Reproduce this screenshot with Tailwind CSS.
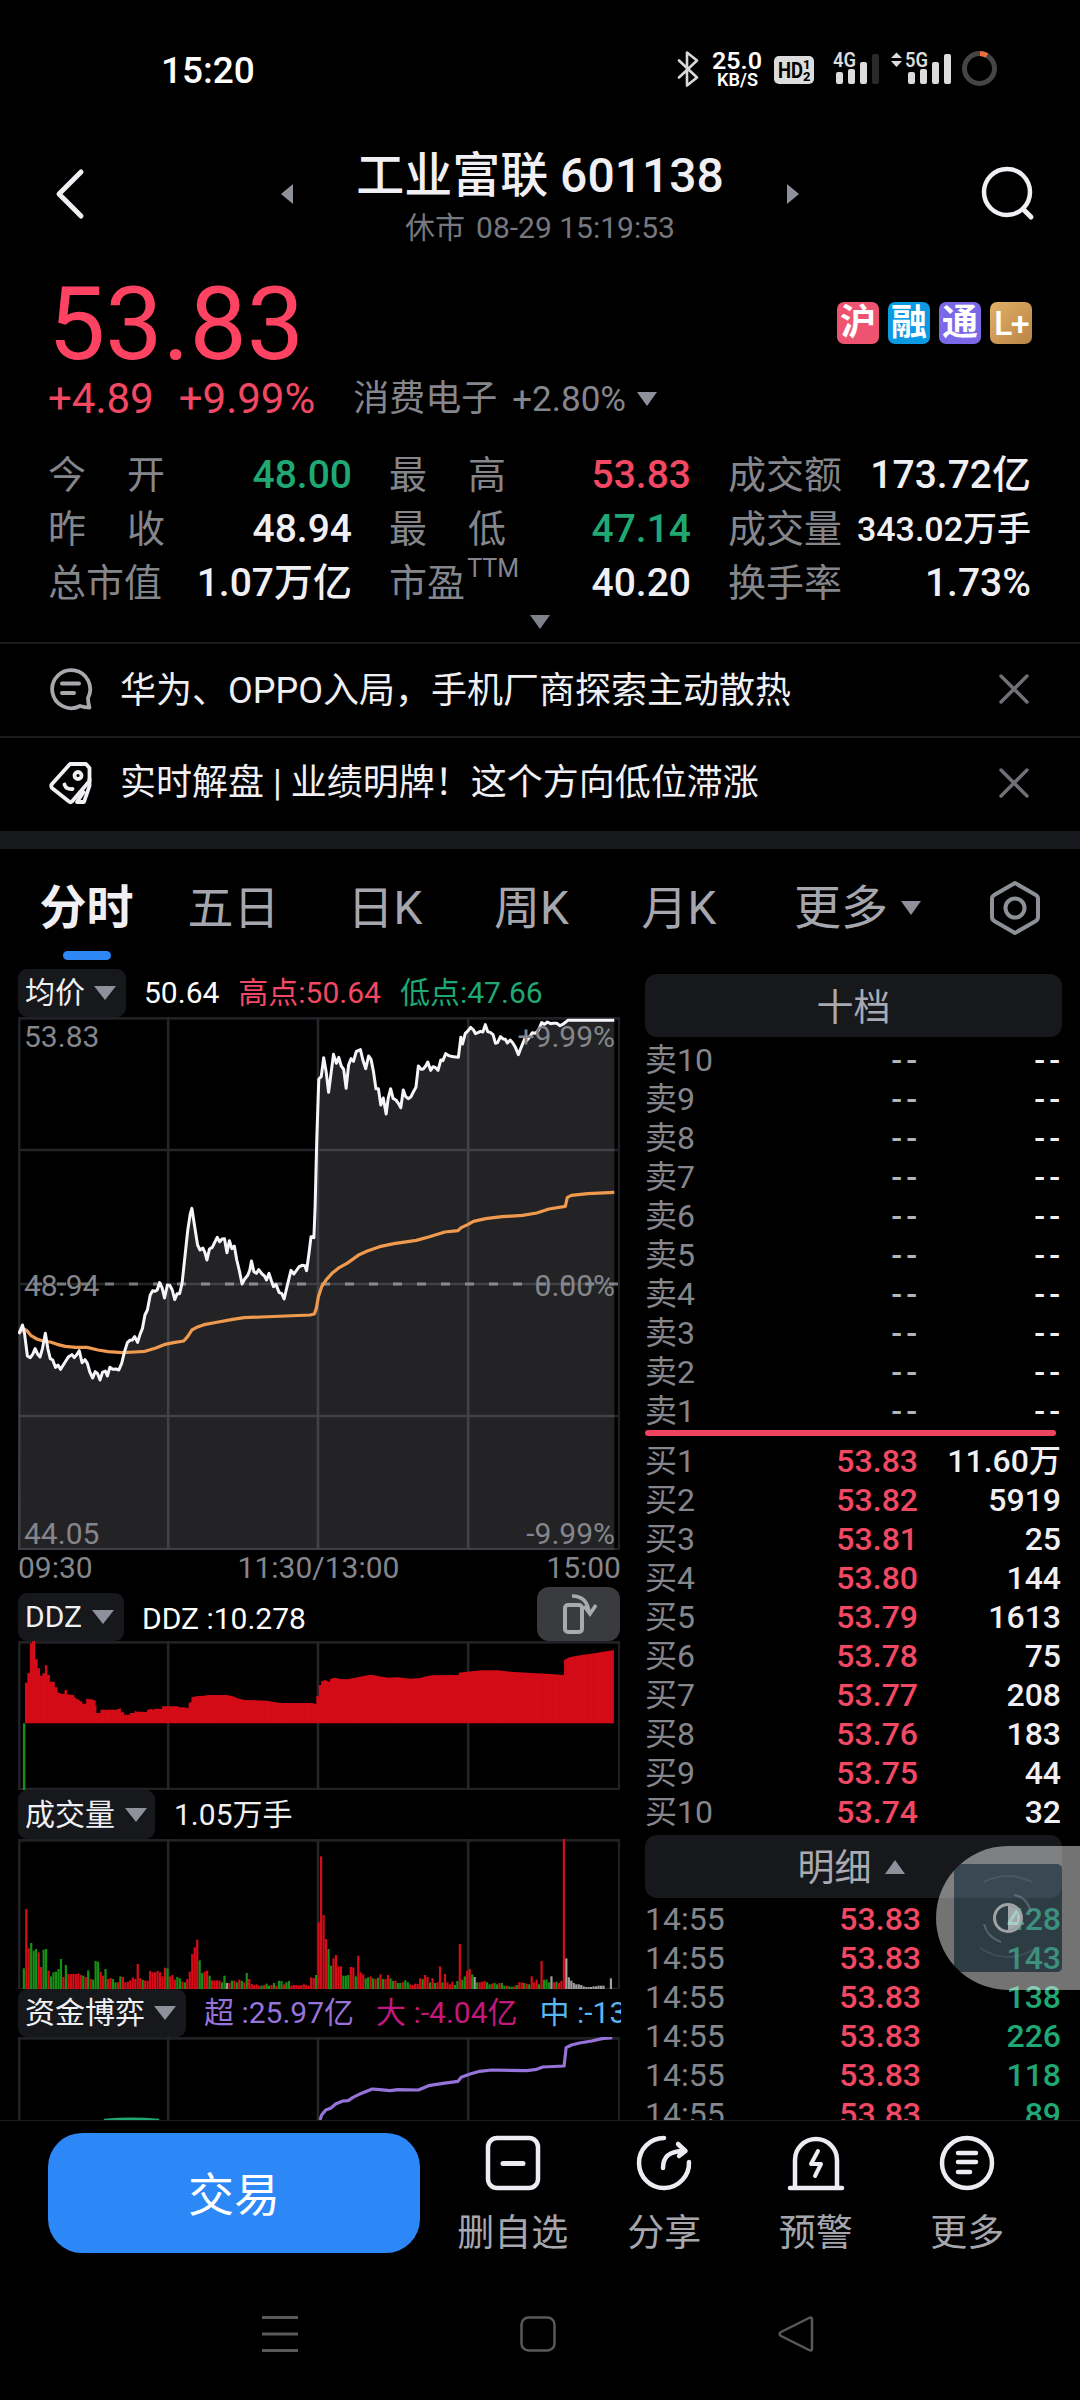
<!DOCTYPE html>
<html lang="zh-CN">
<head>
	<meta charset="UTF-8">
	<meta name="viewport" content="width=device-width, initial-scale=1.0">
	<script src="https://cdn.jsdelivr.net/npm/@tailwindcss/browser@4"></script>
	<title>工业富联 601138</title>
</head>
<body class="bg-black">
<div class="flex h-[2400px] w-[1080px] flex-col overflow-hidden bg-black font-['Roboto','Noto_Sans_CJK_SC',sans-serif] leading-none whitespace-nowrap text-[#f0f0f4]">

	<!-- status bar -->
	<div class="flex h-[140px] shrink-0 items-center justify-between pr-[82px] pl-[161px]">
		<span class="text-[37px] font-medium text-white">15:20</span>
		<svg width="321" height="60" viewBox="677 40 321 60" font-family="Roboto" font-weight="600">
			<path d="M679 61l18 17-10 8V53l10 8-18 17" transform="translate(0,-.5)" fill="none" stroke="#d8d8d8" stroke-width="2.6" stroke-linejoin="round" stroke-linecap="round"/>
			<text x="712" y="69" font-size="24" fill="#fff" textLength="50" lengthAdjust="spacingAndGlyphs">25.0</text>
			<text x="717" y="86" font-size="18.5" fill="#fff" textLength="41" lengthAdjust="spacingAndGlyphs">KB/S</text>
			<rect x="774" y="56" width="40" height="28" rx="5" fill="#dcdcdc"/>
			<text x="778" y="78" font-size="22" font-weight="700" fill="#000" textLength="25" lengthAdjust="spacingAndGlyphs">HD</text>
			<text x="803" y="69" font-size="13" font-weight="800" fill="#000">1</text>
			<text x="803" y="81" font-size="13" font-weight="800" fill="#000">2</text>
			<text x="833" y="67" font-size="20" fill="#dcdcdc" textLength="23" lengthAdjust="spacingAndGlyphs">4G</text>
			<g fill="#dcdcdc">
				<rect x="836" y="72" width="7" height="12" rx="2"/>
				<rect x="848" y="69" width="7" height="15" rx="2"/>
				<rect x="860" y="62" width="7" height="22" rx="2"/>
				<rect x="872" y="54" width="7" height="30" rx="2" fill="#2a2a2a"/>
				<path d="M891 58l5.500-5.500 5.500 5.500zM891 61l5.500 6 5.500-6z"/>
				<rect x="908" y="72" width="7" height="12" rx="2"/>
				<rect x="920" y="69" width="7" height="15" rx="2"/>
				<rect x="932" y="62" width="7" height="22" rx="2"/>
				<rect x="944" y="54" width="7" height="30" rx="2"/>
			</g>
			<text x="905" y="67" font-size="20" fill="#dcdcdc" textLength="23" lengthAdjust="spacingAndGlyphs">5G</text>
			<circle cx="979.500" cy="68.500" r="15" fill="none" stroke="#454545" stroke-width="5"/>
			<path d="M980 53.500a15 15 0 0 1 7 2" fill="none" stroke="#f0703c" stroke-width="5"/>
		</svg>
	</div>

	<!-- header -->
	<div class="flex h-[125px] shrink-0 items-start pr-[44px] pl-[54px]">
		<svg width="32" height="54" viewBox="0 0 32 54" class="mt-[27px]"><path d="M27 5L5 27l22 22" fill="none" stroke="#f0f0f4" stroke-width="5" stroke-linecap="round" stroke-linejoin="round"/></svg>
		<div class="ml-[194px] flex items-start">
			<svg width="14" height="22" viewBox="0 0 14 22" class="mt-[43px]"><path d="M13 1v20L1 11z" fill="#8e909c"/></svg>
			<div class="flex w-[492px] flex-col items-center pt-[12px]">
				<div class="text-[48px] font-medium">工业富联 601138</div>
				<div class="mt-[13px] flex gap-[11px] text-[30px] text-[#77787f]"><span>休市</span><span>08-29 15:19:53</span></div>
			</div>
			<svg width="14" height="22" viewBox="0 0 14 22" class="mt-[43px]"><path d="M1 1v20l12-10z" fill="#8e909c"/></svg>
		</div>
		<svg width="56" height="56" viewBox="0 0 56 56" class="mt-[26px] ml-auto"><circle cx="27" cy="26" r="23" fill="none" stroke="#f0f0f4" stroke-width="4.500"/><path d="M43 43l8 8" stroke="#f0f0f4" stroke-width="5" stroke-linecap="round"/></svg>
	</div>

	<!-- price -->
	<div class="flex h-[180px] shrink-0 justify-between pr-[48px] pl-[48px]">
		<div>
			<div class="mt-[8px] h-[102px] text-[102px] text-[#fe4362]">53.83</div>
			<div class="mt-[3px] flex h-[42px] items-center text-[42px] text-[#f24863]">
				<span>+4.89</span><span class="ml-[25px]">+9.99%</span>
				<span class="ml-[38px] text-[36px] text-[#85868c]">消费电子</span>
				<span class="ml-[15px] text-[35px] text-[#85868c]">+2.80%</span>
				<svg width="22" height="16" viewBox="0 0 22 16" class="ml-[10px]"><path d="M1 1h20l-10 14z" fill="#8e909c"/></svg>
			</div>
		</div>
		<div class="mt-[37px] flex gap-[9px] text-[36px] font-bold text-white">
			<span class="flex size-[42px] items-center justify-center rounded-[7px] bg-[#ee5470]">沪</span>
			<span class="flex size-[42px] items-center justify-center rounded-[7px] bg-[#0c9ae2]">融</span>
			<span class="flex size-[42px] items-center justify-center rounded-[7px] bg-[#7b68e6]">通</span>
			<span class="flex size-[42px] items-center justify-center rounded-[7px] bg-linear-to-br from-[#e3b067] to-[#b98546] text-[34px] font-medium tracking-tighter">L+</span>
		</div>
	</div>

	<!-- quote grid -->
	<div class="flex h-[197px] shrink-0 flex-col px-[48px] pt-[3px]">
		<div class="grid grid-cols-[304px_302px_303px] gap-x-[37px] text-[39px] font-medium [&_b]:flex [&_b]:w-[117px] [&_b]:justify-between [&_b]:text-[38px] [&_b]:font-normal [&_b]:text-[#85868c] [&>div]:flex [&>div]:h-[54px] [&>div]:items-center [&>div]:justify-between">
			<div><b><i class="not-italic">今</i><i class="not-italic">开</i></b><span class="text-[#1fa874]">48.00</span></div>
			<div><b><i class="not-italic">最</i><i class="not-italic">高</i></b><span class="text-[#f24863]">53.83</span></div>
			<div><b>成交额</b><span>173.72亿</span></div>
			<div><b><i class="not-italic">昨</i><i class="not-italic">收</i></b><span>48.94</span></div>
			<div><b><i class="not-italic">最</i><i class="not-italic">低</i></b><span class="text-[#1fa874]">47.14</span></div>
			<div><b>成交量</b><span class="text-[34px]">343.02万手</span></div>
			<div><b>总市值</b><span>1.07万亿</span></div>
			<div><b>市盈<i class="-mt-[8px] -mr-[13px] text-[25px] not-italic">TTM</i></b><span>40.20</span></div>
			<div><b>换手率</b><span>1.73%</span></div>
		</div>
		<svg width="22" height="16" viewBox="0 0 22 16" class="mt-[4px] self-center"><path d="M1 1h20l-10 14z" fill="#7f818c"/></svg>
	</div>

	<!-- news -->
	<div class="flex h-[94px] shrink-0 items-center border-t-2 border-[#1a1b1f] pr-[50px] pl-[49px]">
		<svg width="44" height="44" viewBox="0 0 44 44" fill="none" stroke="#a8a9ad" stroke-width="3.800" stroke-linecap="round" stroke-linejoin="round" class="-mt-[3px]"><path d="M39 31A19 19 0 1 0 31 39c3 1 6 1.500 9.500 1.500C39.500 37 39 34 39 31z"/><path d="M13 16.500h17M13 26h12" stroke-width="4"/></svg>
		<span class="mt-[2px] ml-[27px] text-[36px]">华为、OPPO入局，手机厂商探索主动散热</span>
		<svg width="32" height="32" viewBox="0 0 32 32" class="-mt-[3px] ml-auto"><path d="M3 3l26 26M29 3L3 29" stroke="#6f7078" stroke-width="3.400" stroke-linecap="round"/></svg>
	</div>
	<div class="flex h-[95px] shrink-0 items-center border-t-2 border-[#1a1b1f] pr-[50px] pb-[3px] pl-[49px]">
		<svg width="44" height="44" viewBox="0 0 44 44" fill="none" stroke="#f0f0f4" stroke-width="3.800" stroke-linecap="round" stroke-linejoin="round"><path d="M21 3h16l3.500 4v13L23 40.500q-1.500 1.500-3 0L3 27q-1.500-2 0-4z"/><path d="M40.500 18v7l-5.500 16h-7l6.500-10"/><circle cx="29" cy="14.500" r="3.500"/><path d="M15.500 23.500q1.500 5 8 4.500"/></svg>
		<span class="ml-[27px] text-[36px]">实时解盘 | 业绩明牌！这个方向低位滞涨</span>
		<svg width="32" height="32" viewBox="0 0 32 32" class="ml-auto"><path d="M3 3l26 26M29 3L3 29" stroke="#6f7078" stroke-width="3.400" stroke-linecap="round"/></svg>
	</div>
	<div class="h-[18px] shrink-0 bg-[#17181c]"></div>

	<!-- period tabs -->
	<div class="flex h-[117px] shrink-0 items-center pl-[13px] text-[46px] text-[#a6a7ae]">
		<div class="flex h-full w-[147px] flex-col items-center pt-[35px]">
			<span class="text-[47px] font-bold text-[#f0f0f4]">分时</span>
			<span class="mt-[20px] h-[9px] w-[48px] rounded-full bg-[#2d87f5]"></span>
		</div>
		<span class="w-[147px] text-center">五日</span>
		<span class="w-[156px] text-center">日K</span>
		<span class="w-[137px] text-center">周K</span>
		<span class="w-[158px] text-center">月K</span>
		<span class="ml-[36px] text-[47px]">更多</span>
		<svg width="22" height="16" viewBox="0 0 22 16" class="ml-[12px]"><path d="M1 1h20l-10 14z" fill="#8e909c"/></svg>
		<svg width="54" height="58" viewBox="0 0 54 58" fill="none" stroke="#8e9098" stroke-width="4" stroke-linejoin="round" class="ml-[66px]"><path d="M27 4L47 15.500q3 1.500 3 4V38q0 3-3 4.500L27 54 7 42.500Q4 41 4 38V19.500q0-2.500 3-4z"/><circle cx="27" cy="29" r="9.500"/></svg>
	</div>

	<!-- charts and order book -->
	<div class="flex h-[1154px] shrink-0 overflow-hidden">
		<div class="ml-[18px] flex w-[603px] flex-col overflow-hidden pt-[3px] text-[30px]">
			<div class="flex h-[48px] shrink-0 items-center">
				<span class="flex h-[48px] w-[108px] items-center gap-[9px] rounded-[9px] bg-[#17181c] pl-[7px]">均价<svg width="22" height="16" viewBox="0 0 22 16"><path d="M0 1h22l-11 14z" fill="#8e909c"/></svg></span>
				<span class="ml-[18px] text-white">50.64</span>
				<span class="ml-[19px] text-[#f24863]">高点:50.64</span>
				<span class="ml-[19px] text-[#1fa874]">低点:47.66</span>
			</div>
			<div class="relative h-[533px] shrink-0 text-[#85868c]">
				<svg id="trend" class="h-full w-[602px]" viewBox="44 51 1475 1599" preserveAspectRatio="none"></svg>
				<div class="absolute inset-0 flex flex-col justify-between pt-[5px] pr-[6px] pb-px pl-[6px]">
					<div class="flex justify-between"><span>53.83</span><span>+9.99%</span></div>
					<div class="flex justify-between"><span>48.94</span><span>0.00%</span></div>
					<div class="flex justify-between"><span>44.05</span><span>-9.99%</span></div>
				</div>
			</div>
			<div class="flex h-[36px] shrink-0 items-center justify-between text-[#85868c]"><span>09:30</span><span class="mr-[2px]">11:30/13:00</span><span>15:00</span></div>
			<div class="flex h-[55px] shrink-0 items-end">
				<span class="flex h-[48px] w-[106px] items-center gap-[10px] rounded-[9px] bg-[#17181c] pl-[7px]">DDZ<svg width="22" height="16" viewBox="0 0 22 16"><path d="M0 1h22l-11 14z" fill="#8e909c"/></svg></span>
				<span class="mb-[7px] ml-[18px] text-white">DDZ :10.278</span>
				<span class="mr-px ml-auto flex h-[54px] w-[83px] items-center justify-center rounded-[12px] bg-[#3a3b3e]"><svg width="40" height="42" viewBox="0 0 40 42" fill="none" stroke="#a9aaae" stroke-width="4"><rect x="6" y="12" width="17" height="27" rx="3"/><path d="M13 3c10 0 16 6 17 17M25 13l6 8 6-9" stroke-width="3.600"/></svg></span>
			</div>
			<svg id="ddz" class="h-[149px] w-[602px] shrink-0" viewBox="44 783 1475 447" preserveAspectRatio="none"></svg>
			<div class="flex h-[49px] shrink-0 items-center">
				<span class="flex h-[49px] w-[137px] items-center gap-[10px] rounded-[9px] bg-[#17181c] pl-[7px]">成交量<svg width="22" height="16" viewBox="0 0 22 16"><path d="M0 1h22l-11 14z" fill="#8e909c"/></svg></span>
				<span class="ml-[19px]">1.05万手</span>
			</div>
			<svg id="vol" class="h-[150px] w-[602px] shrink-0" viewBox="44 177 1475 450" preserveAspectRatio="none"></svg>
			<div class="flex h-[48px] shrink-0 items-center">
				<span class="flex h-[48px] w-[168px] shrink-0 items-center gap-[9px] rounded-[9px] bg-[#17181c] pl-[7px]">资金博弈<svg width="22" height="16" viewBox="0 0 22 16"><path d="M0 1h22l-11 14z" fill="#8e909c"/></svg></span>
				<span class="ml-[18px] text-[#9673d8]">超 :25.97亿</span>
				<span class="ml-[22px] text-[#c4187f]">大 :-4.04亿</span>
				<span class="ml-[22px] text-[#5bb5ee]">中 :-13</span>
			</div>
			<svg id="fund" class="h-[150px] w-[602px] shrink-0" viewBox="44 771 1475 450" preserveAspectRatio="none"></svg>
		</div>

		<div class="relative ml-[24px] w-[435px]">
			<div class="mt-[8px] flex h-[63px] w-[417px] items-center justify-center rounded-[12px] bg-[#17181c] pt-[5px] text-[37px] text-[#a9aab2]">十档</div>
			<div id="sell" class="mt-[3px]"></div>
			<div class="h-[6px] w-[411px] rounded-full bg-[#ee4460]"></div>
			<div id="buy" class="mt-[5px]"></div>
			<div class="mt-[4px] flex h-[63px] w-[417px] items-center justify-center gap-[12px] rounded-[12px] bg-[#17181c] pt-[4px] pr-[4px] text-[37px] text-[#a9aab2]">明细<svg width="22" height="16" viewBox="0 0 22 16" class="-mt-[4px]"><path d="M11 1l10 14H1z" fill="#8e909c"/></svg></div>
			<div id="ticks" class="mt-[1px]"></div>

			<!-- floating assistive ball -->
			<svg class="absolute top-[880px] right-0" width="144" height="144" viewBox="0 0 144 144">
				<path d="M144 0H72a72 72 0 0 0-54 24.400V119.600A72 72 0 0 0 72 144h72V0zM24.400 18H120q6 0 6 6v96q0 6-6 6H24.400L18 119.600V24.400z" fill-rule="evenodd" fill="#fff" fill-opacity=".45"/>
				<path d="M18 119.600V24.400L24.400 18H120q6 0 6 6v96q0 6-6 6H24.400z" fill="#5c7888" fill-opacity=".5"/>
				<path d="M18 119.600A72 72 0 0 1 18 24.400z" fill="#fff" fill-opacity=".45"/>
				<g fill="none" stroke="#8fa0aa" stroke-opacity=".18" stroke-width="2"><path d="M48 36q24-12 48 0M44 102q28 18 56 0"/><path d="M78 49q13 2 17 17M48 78q3 13 17 18" stroke-opacity=".4"/></g>
				<circle cx="72" cy="72" r="13.500" fill="none" stroke="#a0a2a4" stroke-width="3"/>
				<path d="M72 60a12 12 0 0 1 0 24z" fill="#fff" fill-opacity=".55"/>
			</svg>
		</div>
	</div>

	<!-- bottom actions -->
	<div class="flex h-[150px] shrink-0 border-t border-[#1a1b1f] pl-[48px]">
		<button class="mt-[12px] h-[120px] w-[372px] rounded-[34px] bg-[#2c87f7] pt-[4px] text-[46px] text-white">交易</button>
		<div class="mt-[12px] ml-[17px] flex text-[37px] text-[#a6a7ae] [&_svg]:size-[60px] [&_svg]:fill-none [&_svg]:stroke-[#ececf2] [&_svg]:stroke-[4.500] [&>div]:flex [&>div]:w-[151.500px] [&>div]:flex-col [&>div]:items-center [&>div]:gap-[22px]">
			<div><svg viewBox="0 0 60 60"><rect x="5" y="5" width="50" height="50" rx="9"/><path d="M20 30.500h20" stroke-width="5" stroke-linecap="round"/></svg>删自选</div>
			<div><svg viewBox="0 0 60 60" stroke-linecap="round" stroke-linejoin="round"><path d="M30 5A25 25 0 1 0 55 29"/><path d="M29 35C29 23 36 18 50 18M44 11l7.500 7-6.500 5"/></svg>分享</div>
			<div><svg viewBox="0 0 60 60" stroke-linecap="round" stroke-linejoin="round"><path d="M4 55h52M9 54V27a21 21 0 0 1 42 0v27"/><path d="M32 18l-7 13h10l-6 12" stroke-width="4"/></svg>预警</div>
			<div><svg viewBox="0 0 60 60" stroke-linecap="round"><circle cx="30" cy="30" r="25"/><path d="M21 20h18M21 29h18M21 39h12"/></svg>更多</div>
		</div>
	</div>

	<!-- system navigation -->
	<svg width="1080" height="130" viewBox="0 0 1080 130" class="shrink-0" fill="none" stroke="#595959" stroke-width="3">
		<path d="M262 47.500h36M262 64h36M262 80.500h36"/>
		<rect x="521.500" y="47.500" width="33" height="33" rx="7" stroke-width="2.500"/>
		<path d="M810 47.500q2 0 2 2v29q0 3-3 1.500l-28-14q-3-2 0-4l28-14z" stroke-width="2.500" stroke-linejoin="round"/>
	</svg>
</div>

<script>
const RED = "#d60c18", GREEN = "#159015", GREY = "#a0a0a0";

// frame + vertical guides, shared by all four panels
function grid(top, bottom) {
	let s = `<path d="M47 ${top + 4}H1517V${bottom - 3}H47z" fill="none" stroke="#202124" stroke-width="2.6" vector-effect="non-scaling-stroke"/>`;
	for (const x of [412, 779, 1147]) s += `<path d="M${x} ${top}V${bottom}" stroke="#242528" stroke-width="2.6" vector-effect="non-scaling-stroke"/>`;
	return s;
}
function line(points, color, width) {
	return `<polyline points="${points}" fill="none" stroke="${color}" stroke-width="${width}" stroke-linejoin="round" vector-effect="non-scaling-stroke"/>`;
}

const price = "46,1002 55,975 60,1000 67,1068 74,1073 80,1063 86,1046 92,1062 98,1071 104,1045 111,1000 117,1045 123,1076 129,1080 136,1102 142,1095 148,1108 155,1095 161,1083 168,1070 176,1064 182,1073 188,1064 194,1052 201,1088 208,1079 214,1090 220,1116 227,1134 233,1115 239,1121 245,1140 251,1117 258,1113 263,1128 269,1102 276,1108 284,1107 291,1110 298,1090 305,1055 312,1028 318,1021 324,1020 330,1010 337,1027 343,1003 349,985 355,945 361,930 368,885 374,872 380,874 385,870 391,848 397,863 403,894 410,855 416,856 422,870 428,899 434,881 440,881 446,850 453,770 460,690 466,642 470,625 477,680 484,735 490,750 497,744 502,758 507,780 513,747 520,742 526,727 532,712 538,725 544,717 550,716 556,758 562,722 568,746 574,738 580,780 586,810 593,852 600,836 607,826 612,810 616,783 622,815 628,820 634,809 642,822 648,828 653,840 659,820 665,843 670,860 676,853 684,878 690,880 696,897 702,866 708,835 713,811 720,822 727,810 733,800 740,796 747,797 751,812 757,760 762,710 769,713 772,620 776,420 781,237 787,230 793,173 799,215 805,277 811,220 817,163 824,190 830,172 836,198 842,208 848,265 854,195 860,176 866,184 873,154 883,149 889,180 896,206 903,168 909,178 915,215 921,266 927,266 933,315 939,294 946,342 951,295 957,266 963,295 970,300 976,310 982,323 988,270 994,290 1000,296 1007,290 1013,275 1019,262 1025,198 1032,208 1037,207 1043,198 1048,186 1055,211 1061,200 1067,203 1073,211 1080,180 1085,182 1092,161 1098,166 1105,169 1111,170 1123,172 1129,112 1133,132 1140,100 1147,92 1153,82 1160,90 1165,101 1171,98 1177,94 1183,96 1189,74 1195,95 1202,98 1208,104 1214,130 1219,128 1226,110 1233,117 1238,118 1243,129 1250,120 1256,128 1262,140 1270,164 1276,145 1285,118 1290,122 1297,112 1304,98 1312,100 1319,91 1327,68 1334,73 1341,66 1349,71 1356,70 1364,70 1372,77 1380,72 1391,61 1505,61";
const avg = "46,1000 57,986 66,992 76,1007 90,1017 105,1023 123,1026 140,1033 160,1039 185,1042 213,1042 240,1050 265,1055 300,1058 330,1056 355,1054 380,1045 402,1034 425,1028 450,1023 460,1009 470,990 482,982 500,974 535,966 570,958 598,953 640,951 700,948 760,945 770,942 775,925 780,890 788,860 800,838 815,818 832,802 850,790 880,764 900,753 930,740 965,731 1020,721 1050,711 1090,696 1122,692 1130,683 1147,673 1160,664 1190,656 1230,650 1280,646 1315,639 1345,627 1385,619 1390,592 1400,586 1440,581 1505,577";
document.getElementById("trend").innerHTML =
	`<path d="M44 450H1517M44 1248H1517M44 852H1517" stroke="#242528" stroke-width="2.6" vector-effect="non-scaling-stroke"/>` + grid(51, 1650) +
	`<path d="M44 852H1517" stroke="#77787c" stroke-width="2.8" stroke-dasharray="9 15" stroke-dashoffset="9" vector-effect="non-scaling-stroke"/>` +
	`<polygon points="44,1650 ${price} 1505,1650" fill="#f0f4ff" fill-opacity=".145"/>` +
	line(avg, "#f09a50", 3.2) + line(price, "#f6f6fa", 3);

const ddz = "61,1030 61,908 67,908 67,880 73,880 73,790 79,790 79,783 86,783 86,838 92,838 92,865 98,865 98,887 104,887 104,880 110,880 110,856 116,856 116,885 122,885 122,905 134,905 134,922 141,922 141,938 147,938 147,940 153,942 158,942 158,930 164,930 164,943 182,946 182,952 190,958 196,962 202,966 202,971 211,971 211,956 218,958 228,958 228,961 234,961 234,976 236,976 236,999 246,999 246,989 284,989 296,985 296,997 304,997 304,1004 318,1004 318,999 330,999 330,992 336,995 348,995 360,996 360,991 366,987 373,987 373,990 380,986 397,987 397,979 435,979 440,982 450,982 462,985 462,970 469,965 469,952 485,948 500,947 510,945 555,945 570,949 585,956 600,960 655,962 685,969 765,969 775,973 775,948 781,948 781,915 787,915 787,904 797,900 808,907 808,898 820,893 835,897 850,898 870,893 900,886 910,884 925,888 950,893 975,892 1005,896 1030,894 1045,889 1060,886 1124,885 1124,878 1145,875 1180,871 1220,871 1250,875 1300,879 1350,882 1382,886 1382,840 1395,832 1425,825 1460,819 1504,810 1504,1030";
let stripes = "";
for (let x = 67; x < 1504; x += 6.1) stripes += `M${x.toFixed(1)} 780V1030`;
document.getElementById("ddz").innerHTML = grid(783, 1230) +
	`<clipPath id="c"><polygon points="${ddz}"/></clipPath><polygon points="${ddz}" fill="${RED}"/><path d="${stripes}" stroke="#c40c16" stroke-width="1" clip-path="url(#c)"/>` +
	`<rect x="56" y="1030" width="6" height="200" fill="#1c8c20"/>`;

// one bar per minute: colour letter + height
const vol = ("g62 r240 r122 g138 g115 g120 r110 r66 g118 g120 r55 g38 g50 g52 g60 g90 r36 g72 r45 r45 r45 r45 r47 r42 g40 r36 g56 r30 g28 g84 g82 r52 r40 g60 r30 r33 g30 g20 r20 g38 " +
	"r36 r20 r22 r26 r34 r30 r75 r33 g28 r25 r25 r54 r50 r50 r54 r50 r38 r64 g62 r38 r42 r28 g36 g32 r22 g20 r30 r52 r105 r125 r148 g86 g48 r52 r55 g40 r26 r26 r26 r25 " +
	"g20 g40 w18 r18 g25 r25 g20 r28 g24 r20 g48 r30 r15 r12 r14 r10 g10 r12 g16 g10 r12 g18 r10 g25 g24 r14 g20 g24 r10 r12 r12 r10 r12 r14 r12 r10 r35 r33 g42 r200 " +
	"r398 r222 r150 g120 g70 r92 r102 r68 r68 g40 g40 g42 r66 r65 g38 r100 r50 r44 g32 g35 r38 g32 r30 g34 r44 g30 r30 r42 g32 g24 r25 g18 g18 r20 g26 g20 r14 r12 r16 r15 " +
	"r32 g30 r42 r36 g20 r32 g18 r20 r68 g20 r45 r20 r14 r22 g12 g24 r135 g28 g38 r55 r60 g44 w36 g20 r20 r22 r24 g20 g14 r16 g18 g14 r18 g18 g10 r10 g8 g6 r8 g12 " +
	"r20 r20 g18 r16 g14 r38 r20 r28 g14 r84 g28 g28 g20 w38 r20 g22 r18 r24 r450 w92 w35 w25 w18 w14 w14 w12 w8 w6 w6 w6 w8 w8 w10 w10 w10 w0 w0 w32").split(" ");
const fill = { r: RED, g: GREEN, w: GREY };
document.getElementById("vol").innerHTML = grid(177, 630) + vol.map((v, i) => {
	const h = +v.slice(1);
	return `<rect x="${(55.5 + i * 6.07).toFixed(1)}" y="${627 - h}" width="5.4" height="${h}" fill="${fill[v[0]]}"/>`;
}).join("");

document.getElementById("fund").innerHTML = grid(771, 1230) +
	line("784,1020 788,1005 798,990 810,985 822,972 840,963 853,962 865,952 880,943 900,933 912,927 930,929 955,932 975,929 1025,930 1050,917 1085,910 1122,904 1130,892 1150,883 1175,874 1205,870 1290,872 1315,868 1330,861 1382,858 1387,803 1400,795 1420,789 1450,783 1475,776 1500,773", "#9673d8", 3.2) +
	line("255,1021 290,1018 320,1017 355,1018 390,1021", "#1fa874", 3);

function row(label, p, v, pw, pc, vc) {
	return `<div class="flex h-[39px] items-center text-[32px]"><span class="w-[113px] text-[#85868c]">${label}</span><span class="${pw} text-right font-medium ${pc}">${p}</span><span class="ml-auto pr-[19px] text-right font-medium ${vc}">${v}</span></div>`;
}
const dash = `<span class="-mr-[3px] tracking-[4px]">--</span>`;
let sell = "", buy = "", ticks = "";
for (let i = 10; i > 0; i--) sell += row("卖" + i, dash, dash, "w-[160px]", "text-[#b4b5ba]", "text-[#f0f0f4]");
["11.60万", 5919, 25, 144, 1613, 75, 208, 183, 44, 32].forEach((v, i) => {
	buy += row("买" + (i + 1), (53.83 - i / 100).toFixed(2), v, "w-[160px]", "text-[#f24863]", "text-[#f0f0f4]");
});
[428, 143, 138, 226, 118, 89].forEach(v => ticks += row("14:55", "53.83", v, "w-[163px]", "text-[#f24863]", "text-[#1fa874]"));
document.getElementById("sell").innerHTML = sell;
document.getElementById("buy").innerHTML = buy;
document.getElementById("ticks").innerHTML = ticks;
</script>
</body>
</html>
